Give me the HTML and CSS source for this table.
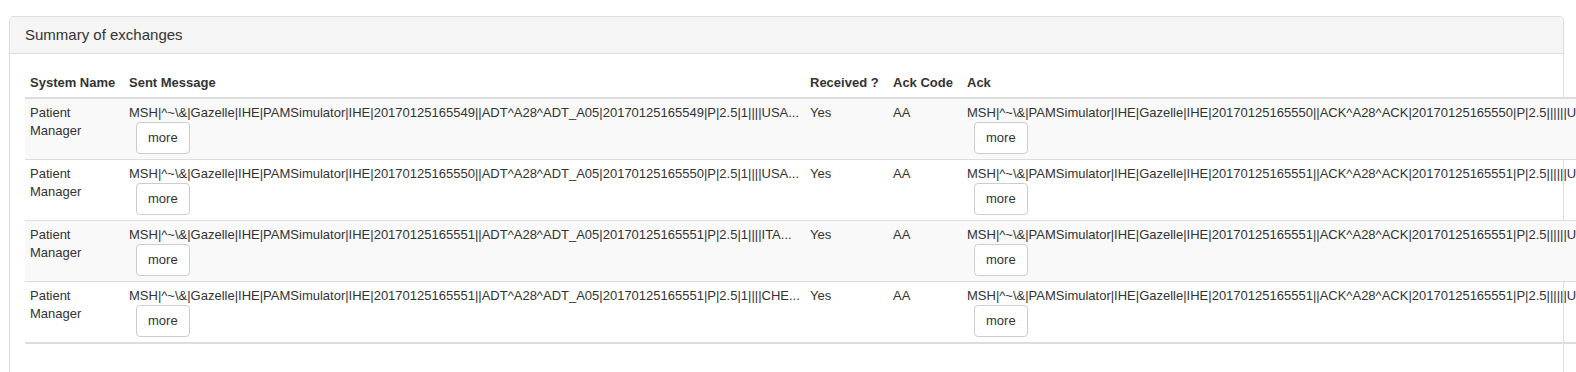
FILE: index.html
```html
<!DOCTYPE html>
<html>
<head>
<meta charset="utf-8">
<link rel="stylesheet" href="styles.css">
</head>
<body>
<div class="page">
  <div class="panel">
    <div class="panel-heading">Summary of exchanges</div>
    <div class="panel-body">
      <table class="exchanges">
        <thead>
          <tr>
            <th class="c-sys">System Name</th>
            <th class="c-sent">Sent Message</th>
            <th class="c-rcv">Received ?</th>
            <th class="c-code">Ack Code</th>
            <th class="c-ack">Ack</th>
          </tr>
        </thead>
        <tbody>
          <tr class="odd">
            <td>Patient Manager</td>
            <td><div class="msg">MSH|^~\&amp;|Gazelle|IHE|PAMSimulator|IHE|20170125165549||ADT^A28^ADT_A05|20170125165549|P|2.5|1||||USA...</div><button class="btn">more</button></td>
            <td>Yes</td>
            <td>AA</td>
            <td><div class="msg">MSH|^~\&amp;|PAMSimulator|IHE|Gazelle|IHE|20170125165550||ACK^A28^ACK|20170125165550|P|2.5||||||UNICODE UTF-8|||...</div><button class="btn">more</button></td>
          </tr>
          <tr>
            <td>Patient Manager</td>
            <td><div class="msg">MSH|^~\&amp;|Gazelle|IHE|PAMSimulator|IHE|20170125165550||ADT^A28^ADT_A05|20170125165550|P|2.5|1||||USA...</div><button class="btn">more</button></td>
            <td>Yes</td>
            <td>AA</td>
            <td><div class="msg">MSH|^~\&amp;|PAMSimulator|IHE|Gazelle|IHE|20170125165551||ACK^A28^ACK|20170125165551|P|2.5||||||UNICODE UTF-8|||...</div><button class="btn">more</button></td>
          </tr>
          <tr class="odd">
            <td>Patient Manager</td>
            <td><div class="msg">MSH|^~\&amp;|Gazelle|IHE|PAMSimulator|IHE|20170125165551||ADT^A28^ADT_A05|20170125165551|P|2.5|1||||ITA...</div><button class="btn">more</button></td>
            <td>Yes</td>
            <td>AA</td>
            <td><div class="msg">MSH|^~\&amp;|PAMSimulator|IHE|Gazelle|IHE|20170125165551||ACK^A28^ACK|20170125165551|P|2.5||||||UNICODE UTF-8|||...</div><button class="btn">more</button></td>
          </tr>
          <tr>
            <td>Patient Manager</td>
            <td><div class="msg">MSH|^~\&amp;|Gazelle|IHE|PAMSimulator|IHE|20170125165551||ADT^A28^ADT_A05|20170125165551|P|2.5|1||||CHE...</div><button class="btn">more</button></td>
            <td>Yes</td>
            <td>AA</td>
            <td><div class="msg">MSH|^~\&amp;|PAMSimulator|IHE|Gazelle|IHE|20170125165551||ACK^A28^ACK|20170125165551|P|2.5||||||UNICODE UTF-8|||...</div><button class="btn">more</button></td>
          </tr>
        </tbody>
      </table>
    </div>
  </div>
</div>
</body>
</html>
```

FILE: styles.css
```css
html, body {
  margin: 0;
  padding: 0;
  background: #fff;
  overflow: hidden;
}
body {
  font-family: "Liberation Sans", Arial, sans-serif;
  font-size: 13px;
  line-height: 18px;
  color: #333;
}
.page {
  padding: 16px 12px 0 9px;
}
.panel {
  border: 1px solid #ddd;
  border-radius: 4px;
  min-height: 400px;
}
.panel-heading {
  background: #f5f5f5;
  border-bottom: 1px solid #ddd;
  border-radius: 3px 3px 0 0;
  padding: 10px 15px;
  font-size: 15px;
  line-height: 16px;
  color: #333;
}
.panel-body {
  padding: 15px;
}
.exchanges {
  border-collapse: collapse;
  border-spacing: 0;
  table-layout: fixed;
  width: 1700px;
  border-bottom: 2px solid #ddd;
}
.exchanges th {
  text-align: left;
  font-weight: bold;
  padding: 5px;
  vertical-align: bottom;
  border-bottom: 2px solid #ddd;
  white-space: nowrap;
}
.exchanges td {
  padding: 5px;
  vertical-align: top;
  border-top: 1px solid #ddd;
}
.exchanges tbody tr:first-child td {
  border-top: 0;
}
.exchanges tr.odd td {
  background: #f9f9f9;
}
.c-sys { width: 89px; }
.c-sent { width: 671px; }
.c-rcv { width: 73px; }
.c-code { width: 64px; }
.c-ack { width: auto; }
.msg {
  white-space: nowrap;
  overflow: hidden;
}
.btn {
  display: block;
  margin-left: 7px;
  font-family: "Liberation Sans", Arial, sans-serif;
  font-size: 13px;
  line-height: 18px;
  height: 32px;
  padding: 6px 11px;
  color: #333;
  background: #fff;
  border: 1px solid #ccc;
  border-radius: 4px;
}
```
